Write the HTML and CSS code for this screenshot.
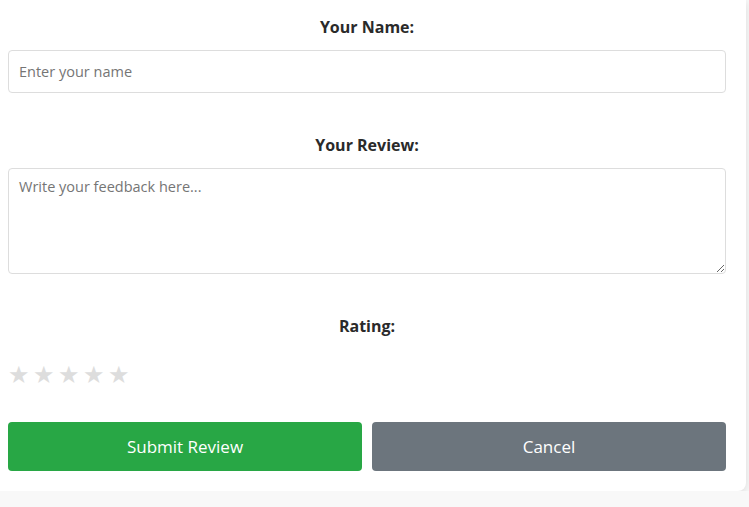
FILE: index.html
```html
<!DOCTYPE html>
<html>
<head>
<meta charset="utf-8">
<link rel="stylesheet" href="styles.css">
</head>
<body>
<div class="card">
  <div class="group">
    <label class="label">Your Name:</label>
    <input class="field" type="text" placeholder="Enter your name">
  </div>
  <div class="group">
    <label class="label">Your Review:</label>
    <textarea class="field area" placeholder="Write your feedback here..."></textarea>
  </div>
  <div class="group rating">
    <label class="label">Rating:</label>
    <div class="stars"><span>★</span><span>★</span><span>★</span><span>★</span><span>★</span></div>
  </div>
  <div class="actions">
    <button class="btn submit">Submit Review</button>
    <button class="btn cancel">Cancel</button>
  </div>
</div>
</body>
</html>
```
FILE: styles.css
```css
html, body { margin: 0; padding: 0; }
body {
  background: #f8f8f8;
  font-family: "Open Sans", sans-serif;
  color: #333;
  overflow: hidden;
}
.card {
  background: #fff;
  width: 746px;
  box-sizing: border-box;
  padding: 15px 20px 20px 8px;
  border-radius: 0 0 8px 0;
  box-shadow: 0 2px 8px rgba(0,0,0,0.12);
}
.group { margin-bottom: 40px; }
.label {
  display: block;
  text-align: center;
  font-weight: 700;
  font-size: 16px;
  line-height: 24px;
  margin-bottom: 11px;
  color: #2a2a2a;
}
.field {
  display: block;
  width: 100%;
  box-sizing: border-box;
  height: 43px;
  border: 1px solid #ddd;
  border-radius: 4px;
  padding: 0 10px;
  font-family: "Open Sans", sans-serif;
  font-size: 14.5px;
  color: #333;
  outline: none;
}
.field::placeholder { color: #757575; }
.area {
  height: 106px;
  padding: 8px 10px;
  resize: vertical;
  line-height: 20px;
}
.stars {
  display: flex;
  gap: 2px;
  font-size: 24px;
  line-height: 30px;
  color: #ddd;
  margin-top: 21px;
}
.stars span { width: 23px; }
.rating { margin-bottom: 33px; }
.actions {
  display: flex;
  gap: 10px;
}
.btn {
  flex: 1;
  height: 49px;
  border: none;
  border-radius: 4px;
  color: #fff;
  font-family: "Open Sans", sans-serif;
  font-size: 17px;
}
.submit { background: #28a745; }
.cancel { background: #6c757d; }
```
